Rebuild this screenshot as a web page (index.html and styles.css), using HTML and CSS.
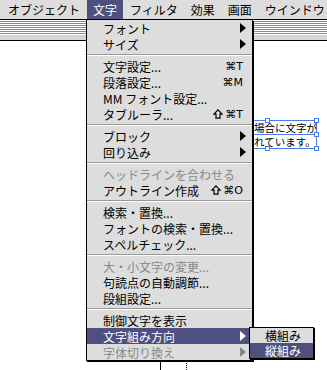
FILE: index.html
```html
<!DOCTYPE html>
<html lang="ja">
<head>
    <meta charset="UTF-8">
    <title>文字メニュー</title>
    <link rel="stylesheet" href="styles.css">
</head>
<body>
<div class="screen">

    <!-- menu bar -->
    <div class="menubar">
        <span class="bar-item">オブジェクト</span>
        <span class="bar-item active">文字</span>
        <span class="bar-item">フィルタ</span>
        <span class="bar-item">効果</span>
        <span class="bar-item">画面</span>
        <span class="bar-item">ウインドウ</span>
    </div>

    <!-- document window behind the menu -->
    <div class="window">
        <div class="titlebar"></div>
        <div class="canvas">
            <div class="guide solid"></div>
            <div class="guide dotted"></div>
            <div class="text-frame">
                <div class="frame-line first">場合に文字が</div>
                <div class="frame-line">れています。</div>
                <span class="handle h-tm"></span>
                <span class="handle h-tr"></span>
                <span class="handle h-mr"></span>
                <span class="handle h-bm"></span>
                <span class="handle h-br"></span>
            </div>
        </div>
    </div>

    <!-- 文字 menu -->
    <div class="menu">
        <div class="item"><span class="label">フォント</span><span class="arrow"></span></div>
        <div class="item"><span class="label">サイズ</span><span class="arrow"></span></div>
        <div class="sep"></div>
        <div class="item"><span class="label">文字設定...</span><span class="key">⌘T</span></div>
        <div class="item"><span class="label">段落設定...</span><span class="key">⌘M</span></div>
        <div class="item"><span class="label">MM フォント設定...</span></div>
        <div class="item">
            <span class="label">タブルーラ...</span>
            <svg class="shift" width="10" height="10" viewBox="0 0 10 10"><path d="M5 0.8 L9.2 5.2 H7 V9.2 H3 V5.2 H0.8 Z" fill="none" stroke="#000" stroke-width="1.2"/></svg>
            <span class="key">⌘T</span>
        </div>
        <div class="sep"></div>
        <div class="item"><span class="label">ブロック</span><span class="arrow"></span></div>
        <div class="item"><span class="label">回り込み</span><span class="arrow"></span></div>
        <div class="sep"></div>
        <div class="item disabled"><span class="label">ヘッドラインを合わせる</span></div>
        <div class="item">
            <span class="label">アウトライン作成</span>
            <svg class="shift" width="10" height="10" viewBox="0 0 10 10"><path d="M5 0.8 L9.2 5.2 H7 V9.2 H3 V5.2 H0.8 Z" fill="none" stroke="#000" stroke-width="1.2"/></svg>
            <span class="key">⌘O</span>
        </div>
        <div class="sep"></div>
        <div class="item"><span class="label">検索・置換...</span></div>
        <div class="item"><span class="label">フォントの検索・置換...</span></div>
        <div class="item"><span class="label">スペルチェック...</span></div>
        <div class="sep"></div>
        <div class="item disabled"><span class="label">大・小文字の変更...</span></div>
        <div class="item"><span class="label">句読点の自動調節...</span></div>
        <div class="item"><span class="label">段組設定...</span></div>
        <div class="sep"></div>
        <div class="item"><span class="label">制御文字を表示</span></div>
        <div class="item selected">
            <span class="label">文字組み方向</span><span class="arrow"></span>
            <!-- submenu -->
            <div class="submenu">
                <div class="sub-item">横組み</div>
                <div class="sub-item selected">縦組み</div>
            </div>
        </div>
        <div class="item disabled"><span class="label">字体切り換え</span><span class="arrow"></span></div>
    </div>

</div>
</body>
</html>
```

FILE: styles.css
```css
* {
    margin: 0;
    padding: 0;
    box-sizing: border-box;
}
body {
    font-family: "Noto Sans CJK JP", "DejaVu Sans", sans-serif;
    font-size: 12px;
    color: #000;
    background: #fff;
}
.screen {
    position: relative;
    width: 327px;
    height: 370px;
    overflow: hidden;
    background: #fff;
}

/* menu bar */
.menubar {
    display: flex;
    gap: 1px;
    height: 20px;
    padding-left: 2px;
    background: #dddddd;
    border-bottom: 1px solid #000;
    white-space: nowrap;
}
.bar-item {
    padding: 0 6px;
    line-height: 19px;
}
.bar-item.active {
    background: #4f4f80;
    color: #fff;
}

/* window */
.titlebar {
    height: 21px;
    border-bottom: 1px solid #000;
    background:
        repeating-linear-gradient(to bottom, #fff 0 1px, #8c8c8c 1px 2px) 0 0 / 100% 15px no-repeat,
        #d6d6d6;
}
.canvas {
    position: relative;
    height: 329px;
    background: #fff;
}
.guide {
    position: absolute;
    top: 290px;
    bottom: 0;
    width: 0;
}
.guide.solid {
    left: 160px;
    border-left: 1px solid #000;
}
.guide.dotted {
    left: 186px;
    border-left: 1px dotted #000;
}
.text-frame {
    position: absolute;
    left: 218px;
    top: 79px;
    width: 99px;
    height: 29px;
    border: 1px solid #4a7bea;
}
.frame-line {
    height: 13px;
    padding-left: 35px;
    font-size: 10.5px;
    line-height: 13px;
    white-space: nowrap;
}
.frame-line.first {
    height: 14px;
    border-bottom: 1px solid #4a7bea;
}
.handle {
    position: absolute;
    width: 5px;
    height: 5px;
    background: #fff;
    border: 1px solid #4a7bea;
}
.h-tm { left: 46px; top: -3px; }
.h-tr { left: 95px; top: -3px; }
.h-mr { left: 95px; top: 11px; }
.h-bm { left: 46px; top: 25px; }
.h-br { left: 95px; top: 25px; }

/* dropdown menu */
.menu {
    position: absolute;
    left: 86px;
    top: 20px;
    width: 167px;
    background: #dddddd;
    border: 1px solid #000;
    border-top: none;
    box-shadow: 1px 1px 0 #000;
}
.item {
    position: relative;
    display: flex;
    align-items: center;
    height: 16px;
    padding: 0 6px 0 16px;
    white-space: nowrap;
}
.label {
    flex: 1;
}
.key {
    margin-right: 3px;
    font-family: "DejaVu Sans", sans-serif;
    font-size: 11px;
}
.shift {
    margin-right: 2px;
}
.arrow {
    width: 0;
    height: 0;
    border-left: 6px solid #000;
    border-top: 5px solid transparent;
    border-bottom: 5px solid transparent;
}
.item.disabled {
    color: #888;
}
.item.disabled .arrow {
    border-left-color: #888;
}
.item.selected {
    background: #4f4f80;
    color: #fff;
}
.item.selected .arrow {
    border-left-color: #fff;
}
.sep {
    height: 6px;
    border-bottom: 2px solid #dddddd;
    border-top: 2px solid #dddddd;
    background: linear-gradient(to bottom, #999 0 1px, #fff 1px 2px);
}

/* submenu */
.submenu {
    position: absolute;
    left: 162px;
    top: -1px;
    width: 65px;
    background: #dddddd;
    border: 1px solid #000;
    box-shadow: 1px 1px 0 #000;
    color: #000;
}
.sub-item {
    height: 15px;
    padding-left: 15px;
    line-height: 15px;
}
.sub-item.selected {
    background: #4f4f80;
    color: #fff;
}
```
